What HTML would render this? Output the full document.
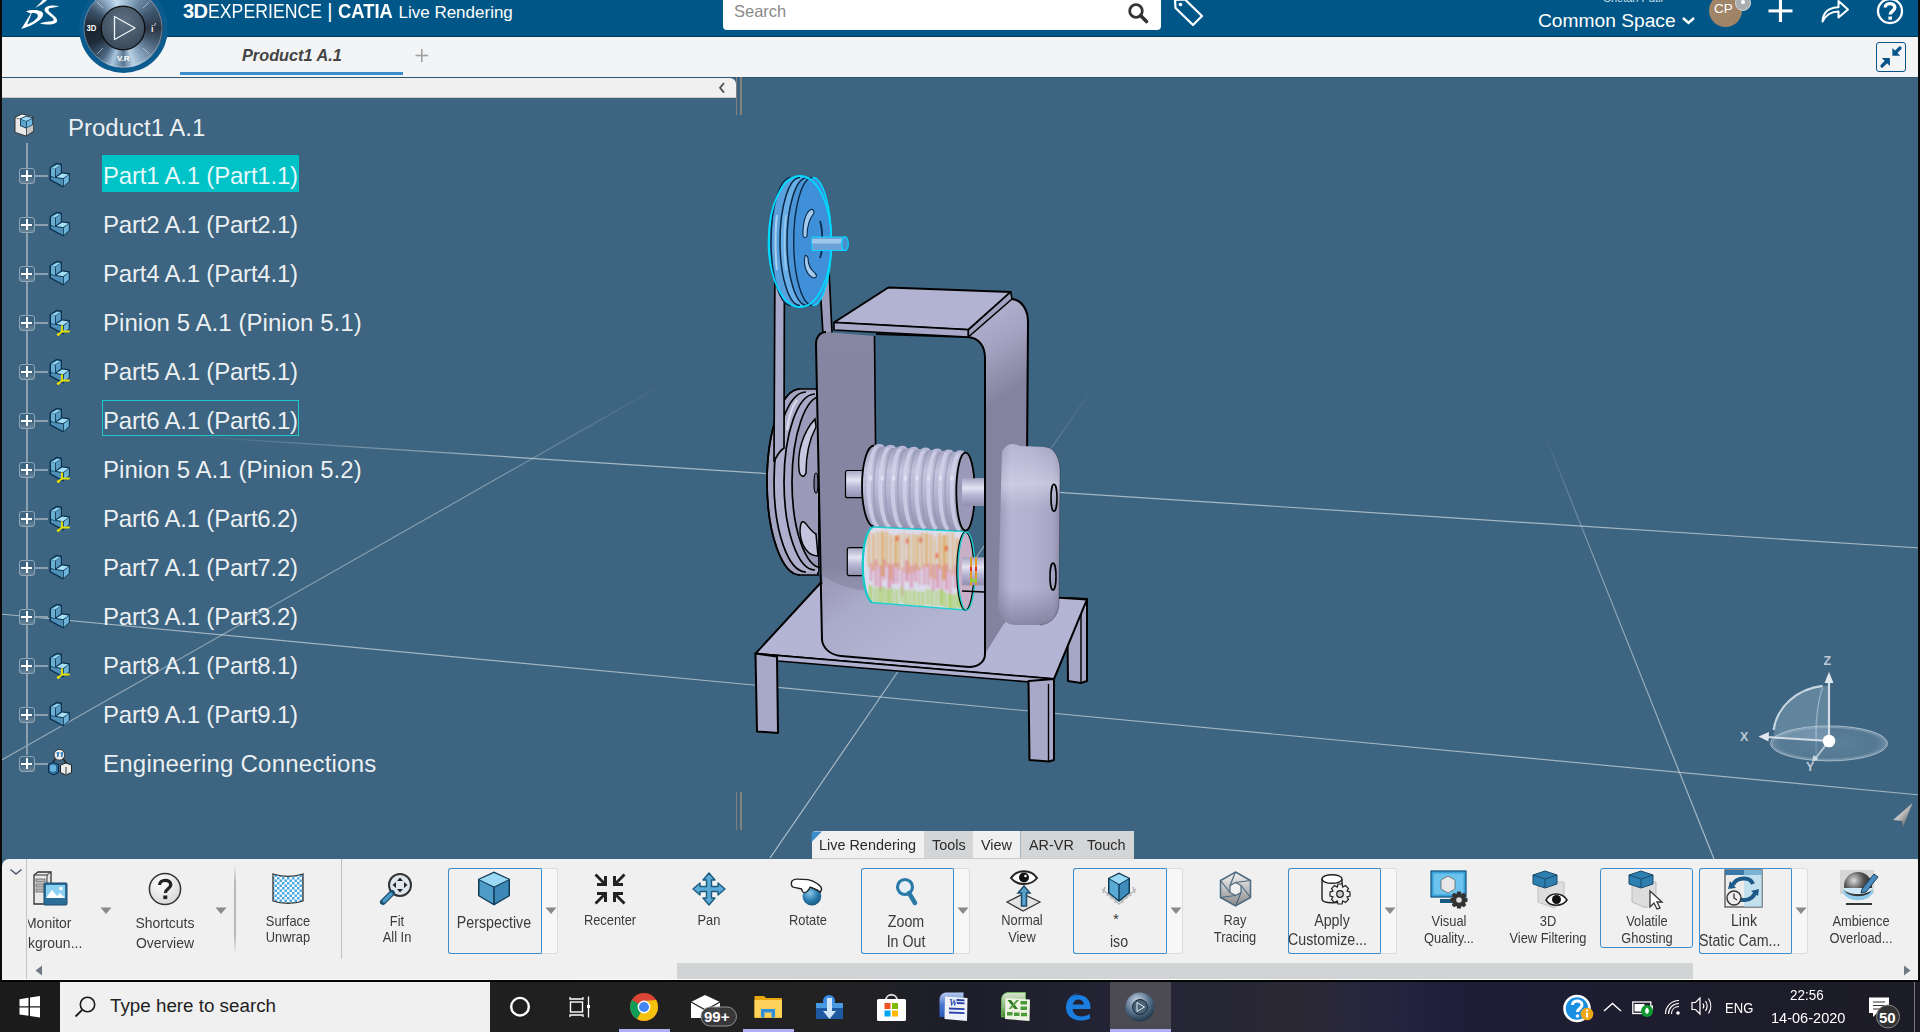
<!DOCTYPE html>
<html><head><meta charset="utf-8">
<style>
*{margin:0;padding:0;box-sizing:border-box}
html,body{width:1920px;height:1032px;overflow:hidden;background:#3d6480;font-family:"Liberation Sans",sans-serif}
.a{position:absolute}
svg{position:absolute;overflow:visible}
#topbar{left:0;top:0;width:1920px;height:37px;background:#005686;border-bottom:1px solid #003a5c}
#tabbar{left:0;top:37px;width:1920px;height:40px;background:#f3f4f6}
#vp{left:0;top:77px;width:1920px;height:782px;background:#3d6480;border-top:1px solid #2f5570}
#lborder{left:0;top:0;width:2px;height:981px;background:#0a0a0a;z-index:50}
.nw{white-space:pre}
.tt{position:absolute;left:103px;font-size:24.8px;letter-spacing:-0.2px;color:rgba(255,255,255,0.92);white-space:pre;line-height:28px;height:28px;transform:translateY(0.6px) scaleX(0.967);transform-origin:0 0}
.pb{position:absolute;left:19px;width:16px;height:16px;border:1.5px solid #8fa6b6;border-radius:3px;background:linear-gradient(#3d6480 50%,#6a8598 100%)}
.pb:before{content:"";position:absolute;left:0.7px;top:5.6px;width:11.6px;height:2px;background:#fff}
.pb:after{content:"";position:absolute;left:5.5px;top:0.8px;width:2px;height:11.6px;background:#fff}
.hl{position:absolute;left:14px;width:35px;height:2px;background:#8aa0b0}
#toolbar{left:2px;top:859px;width:1918px;height:121px;background:#f0f0f0;border-top-left-radius:6px}
#taskbar{left:0;top:980px;width:1920px;height:52px;background:#1d1d26}
.tl{position:absolute;font-size:14px;color:#3a3a3a;text-align:center;line-height:17px;white-space:pre}

</style></head>
<body>
<div id="vp" class="a"></div>
<div id="topbar" class="a"></div>
<div id="tabbar" class="a"></div>
<div id="lborder" class="a"></div>
<!-- DS logo -->
<svg style="left:15px;top:0" width="50" height="32" viewBox="0 0 50 32">
<path fill="#fff" fill-rule="evenodd" d="M11,11.4 C15,9.8 23,9.4 26.8,11.8 C29.3,13.6 28.2,17.2 24,20.6 C19,24.6 12,27.6 6.2,28.9 L15.8,13.4 C14,12.6 12.5,12 11,11.4 Z M16.6,13.2 L12.2,24.4 C17,22.4 21.8,19.5 22.8,16.4 C23.3,14 20.5,12.8 16.6,13.2 Z"/>
<path fill="#fff" d="M20,8 C24.5,5.8 30,2.6 33,-1 L28.6,-1 C26.2,2.2 23.2,5 20,8 Z"/>
<path fill="#fff" d="M 44.2 6.2 C 39 5.2 33.2 5.4 30.6 7.4 C 28.4 9.4 29.8 11.6 33 14.2 L 37.4 17.8 C 39.6 19.6 38.8 21 36.6 21.2 C 32.6 21.5 28.8 21.9 24.8 23.6 C 30 24.9 37 25.1 40.6 23.1 C 43.3 21.5 42.4 18.6 39.2 16 L 34.4 11.8 C 32.8 10.3 33.2 8.7 35.2 8.1 C 38.2 7.3 42 7.1 44.2 6.2 Z"/>
</svg>
<!-- compass -->
<div class="a" style="left:78.5px;top:-16.5px;width:89px;height:89px;border-radius:50%;background:#0b5b8f"></div>
<div class="a" style="left:83.5px;top:-11.5px;width:79px;height:79px;border-radius:50%;background:conic-gradient(from 0deg,#a9c3da 0deg,#6d8aa6 30deg,#3e566e 60deg,#2a3644 90deg,#485f76 115deg,#8eaac4 150deg,#b8d0e4 165deg,#5a7892 180deg,#aac6de 198deg,#4a6680 215deg,#1e2a38 245deg,#1a2430 270deg,#3c5268 300deg,#8aa6c0 325deg,#c4dcee 345deg,#a9c3da 360deg)"></div>
<svg style="left:78px;top:-17px" width="90" height="90" viewBox="-45 -45 90 90">
<defs>
<radialGradient id="cbt" cx="0.5" cy="0.35" r="0.6">
<stop offset="0" stop-color="#5e7183"/><stop offset="1" stop-color="#3c4c5c"/>
</radialGradient>
</defs>
<circle r="39" fill="none" stroke="#dbe6ee" stroke-width="0.7" opacity="0.55"/>
<g stroke="#d9e4ee" stroke-width="0.8" opacity="0.75">
<line x1="-26" y1="-26" x2="-20" y2="-20"/><line x1="26" y1="-26" x2="20" y2="-20"/><line x1="-26" y1="26" x2="-20" y2="20"/><line x1="26" y1="26" x2="20" y2="20"/>
</g>
<circle r="21.8" fill="url(#cbt)" stroke="#0d0d0d" stroke-width="1.3"/>
<path d="M-8.5,-11.5 L12,0 L-8.5,11.5 Z" fill="none" stroke="#f0f4f8" stroke-width="1.3" stroke-linejoin="round"/>
<text x="-36.5" y="3.2" font-size="8.6" font-weight="bold" fill="#fff" font-family="Liberation Sans" transform="scale(0.9,1)" transform-origin="-36.5 0">3D</text>
<text x="28" y="3.5" font-size="9" font-weight="bold" fill="#eee" font-family="Liberation Sans">i</text>
<path d="M32.5,-5 L31.5,-2" stroke="#eee" stroke-width="0.8"/>
<text x="-6" y="33" font-size="8" font-weight="bold" fill="#fff" font-family="Liberation Sans">V.R</text>
<rect x="-0.6" y="-45" width="1.2" height="5" fill="#fff"/>
</svg>
<!-- title -->
<div class="a nw" style="left:183px;top:-3px;color:#fff;font-size:20px;line-height:28px"><b style="letter-spacing:-0.5px">3D</b><span style="display:inline-block;transform:scaleX(0.885);transform-origin:0 0;width:114px">EXPERIENCE</span> <span style="font-weight:normal">|</span> <b style="display:inline-block;transform:scaleX(0.92);transform-origin:0 0;width:55px">CATIA</b> <span style="font-size:17px">Live Rendering</span></div>
<!-- search -->
<div class="a" style="left:723px;top:0;width:438px;height:30px;background:#fff;border-radius:0 0 4px 4px"></div>
<div class="a nw" style="left:734px;top:1px;font-size:16.5px;line-height:20px;color:#8a8a8a">Search</div>
<svg style="left:1127px;top:2px" width="24" height="22" viewBox="0 0 24 22"><circle cx="9" cy="9" r="6.3" fill="none" stroke="#333" stroke-width="2.8"/><line x1="13.5" y1="13.5" x2="19.5" y2="19.5" stroke="#333" stroke-width="3.6" stroke-linecap="round"/></svg>
<!-- tag icon -->
<svg style="left:1172px;top:-3px" width="34" height="30" viewBox="0 0 34 30"><path d="M3,3 L13,2.5 L30,19 L21,28 L3.5,11 Z" fill="none" stroke="#fff" stroke-width="2.2" stroke-linejoin="round"/><circle cx="8.5" cy="7.5" r="1.8" fill="#fff"/></svg>
<!-- right -->
<div class="a nw" style="left:1603px;top:-8px;font-size:11px;line-height:12px;color:#cfe0ee">Chetan Patil</div>
<div class="a nw" style="left:1538px;top:9px;font-size:19.2px;line-height:24px;color:#fff">Common Space</div>
<svg style="left:1681px;top:16px" width="15" height="10" viewBox="0 0 15 10"><path d="M2,2 L7.5,7 L13,2" fill="none" stroke="#fff" stroke-width="2.4"/></svg>
<div class="a" style="left:1709px;top:-6px;width:33px;height:33px;border-radius:50%;background:#a08468"></div>
<div class="a nw" style="left:1714px;top:1px;font-size:13.5px;line-height:16px;color:#fff">CP</div>
<div class="a" style="left:1735px;top:-5px;width:16px;height:16px;border-radius:50%;background:#a9adb2;border:1px solid #d5d8db"></div>
<div class="a" style="left:1741px;top:0px;width:4px;height:4px;border-radius:50%;background:#fff"></div>
<svg style="left:1767px;top:-2px" width="27" height="26" viewBox="0 0 27 26"><rect x="11.9" y="0" width="3.1" height="24" fill="#fff"/><rect x="1.5" y="11.4" width="24" height="3" fill="#fff"/></svg>
<svg style="left:1820px;top:-2px" width="30" height="26" viewBox="0 0 30 26"><path d="M2.5,23.5 C3,14 9,9.5 18.5,9.2 L18.5,3 L28,11.5 L18.5,19.5 L18.5,13.5 C10.5,13.5 6,16.5 2.5,23.5 Z" fill="none" stroke="#fff" stroke-width="2" stroke-linejoin="round"/></svg>
<svg style="left:1875px;top:-3px" width="30" height="28" viewBox="0 0 30 28"><circle cx="15" cy="14" r="12" fill="none" stroke="#fff" stroke-width="2.3"/><path d="M10.2,10.5 C10.2,5.5 19.8,5.2 19.8,10.5 C19.8,14 15.2,14.2 15.2,17.5" fill="none" stroke="#fff" stroke-width="3.4"/><rect x="13.4" y="19.5" width="3.6" height="3.2" fill="#fff"/></svg>
<!-- tab bar content -->
<div class="a nw" style="left:242px;top:45px;font-size:16.3px;line-height:20px;color:#444;font-weight:bold;font-style:italic">Product1 A.1</div>
<div class="a" style="left:180px;top:72px;width:223px;height:3px;background:#3a8ccc"></div>
<svg style="left:415px;top:48px" width="14" height="15" viewBox="0 0 14 15"><rect x="6" y="1" width="1.6" height="13" fill="#a0a0a0"/><rect x="0.5" y="6.7" width="12.6" height="1.6" fill="#a0a0a0"/></svg>
<div class="a" style="left:1876px;top:42px;width:30px;height:30px;border:1.3px solid #05558a;border-radius:3px"></div>
<svg style="left:1876px;top:42px" width="30" height="30" viewBox="0 0 30 30"><g fill="#05558a"><path d="M16.4,5.9 L16.4,13.7 L24.2,13.7 Z"/><path d="M5.8,16 L13.9,16 L13.9,24 Z"/></g><g stroke="#05558a" stroke-width="3.2" stroke-linecap="round"><path d="M19.5,10.5 L24,6"/><path d="M10.5,19.5 L6,24"/></g></svg>
<!-- panel header -->
<div class="a" style="left:2px;top:78px;width:734px;height:20px;background:#f0f0f0;border-bottom:1.5px solid #c8c8c8;border-top-right-radius:6px"></div>
<svg style="left:716px;top:82px" width="12" height="12" viewBox="0 0 12 12"><path d="M8,1 L4,5.8 L8,10.6" fill="none" stroke="#505058" stroke-width="1.8"/></svg>
<div class="a" style="left:736px;top:77px;width:1.2px;height:38px;background:#838080"></div>
<div class="a" style="left:740px;top:77px;width:2px;height:38px;background:#838080"></div>
<div class="a" style="left:736px;top:792px;width:1.2px;height:38px;background:#838080"></div>
<div class="a" style="left:740px;top:792px;width:2px;height:38px;background:#838080"></div>
<div class="a" style="left:1918px;top:0;width:2px;height:981px;background:#0a0a0a;z-index:50"></div>
<svg style="left:0;top:0" width="1920" height="1032" viewBox="0 0 1920 1032">
<defs>
<linearGradient id="lgA" gradientUnits="userSpaceOnUse" x1="180" y1="0" x2="520" y2="0"><stop offset="0" stop-color="#c8d4dc" stop-opacity="0"/><stop offset="1" stop-color="#c8d4dc" stop-opacity="0.75"/></linearGradient>
<linearGradient id="lgC" gradientUnits="userSpaceOnUse" x1="0" y1="761" x2="667" y2="382"><stop offset="0" stop-color="#c8d4dc" stop-opacity="0.6"/><stop offset="0.75" stop-color="#c8d4dc" stop-opacity="0.5"/><stop offset="1" stop-color="#c8d4dc" stop-opacity="0"/></linearGradient>
<linearGradient id="lgD" gradientUnits="userSpaceOnUse" x1="770" y1="858" x2="1098" y2="380"><stop offset="0" stop-color="#d4dee6" stop-opacity="0.8"/><stop offset="0.7" stop-color="#c8d4dc" stop-opacity="0.55"/><stop offset="1" stop-color="#c8d4dc" stop-opacity="0"/></linearGradient>
<linearGradient id="lgE" gradientUnits="userSpaceOnUse" x1="1714" y1="859" x2="1543" y2="430"><stop offset="0" stop-color="#c8d4dc" stop-opacity="0.8"/><stop offset="0.7" stop-color="#c8d4dc" stop-opacity="0.55"/><stop offset="1" stop-color="#c8d4dc" stop-opacity="0"/></linearGradient>
</defs>
<g stroke-width="1.15" fill="none">
<line x1="0" y1="424" x2="1920" y2="548" stroke="url(#lgA)"/>
<line x1="0" y1="614" x2="1920" y2="795" stroke="#c8d4dc" stroke-opacity="0.72"/>
<line x1="0" y1="761" x2="667" y2="382" stroke="url(#lgC)"/>
<line x1="770" y1="858" x2="1098" y2="380" stroke="url(#lgD)"/>
<line x1="1714" y1="859" x2="1543" y2="430" stroke="url(#lgE)"/>
</g>
</svg>
<svg width="0" height="0" style="left:0;top:0"><defs>
<g id="partic">
<path d="M0.5,5.5 L7.5,0.8 L13,1.8 L13,10.2 L20.8,11.2 L20.8,19.5 L14,25.5 L0.5,18.2 Z" fill="#0c3350"/>
<path d="M2,6 L7.8,2.4 L11.6,3 L6,6.8 Z" fill="#8fd3f0"/>
<path d="M2,6 L6,6.8 L6,15.5 L2,14 Z" fill="#6aaed2"/>
<path d="M6.8,6.8 L11.8,3.2 L11.8,10.8 L6.8,14.2 Z" fill="#5a9cc4"/>
<path d="M7.5,15 L13.2,11.5 L19.5,12.4 L14,16.2 Z" fill="#a6e0f7"/>
<path d="M2,15 L14,17.2 L14,24 L2,17.6 Z" fill="#4f8fb8"/>
<path d="M14.8,16.8 L19.8,12.8 L19.8,19.4 L14.8,24 Z" fill="#6eb3d8"/>
</g>
<g id="yel"><path d="M13,17 L13,22.5 M13,22.5 L20,22.5 M13,22.5 L9.5,25.5" stroke="#e8e000" stroke-width="1.8" fill="none" stroke-linecap="round"/><circle cx="9.2" cy="25.6" r="1.4" fill="#e8e000"/></g>
</defs></svg>
<svg style="left:13px;top:112px" width="24" height="26" viewBox="0 0 24 26">
<path d="M1.5,5 L9,1.5 L21,4.5 L21,19.5 L13,24.5 L1.5,20.5 Z" fill="#333"/>
<path d="M2.5,5.5 L9,2.5 L20,5 L13.5,8.5 Z" fill="#f4f4f4"/>
<path d="M2.5,6 L13,9 L13,23.5 L2.5,20 Z" fill="#e8e8e8"/>
<path d="M13.8,9 L20.2,5.6 L20.2,19 L13.8,23.2 Z" fill="#c8c8c8"/>
<path d="M7,6.5 L13.5,3.5 L20,5.5 L20,13 L13,16.5 L7,14 Z" fill="#0f3a5c"/>
<path d="M7.8,7 L13.5,4.5 L19.2,6.2 L13.2,9 Z" fill="#9fd8f2"/>
<path d="M7.8,7.6 L13,9.6 L13,15.6 L7.8,13.6 Z" fill="#5ba3cb"/>
<path d="M13.8,9.6 L19.2,7 L19.2,12.5 L13.8,15.4 Z" fill="#6fb8dc"/>
</svg>
<div class="tt" style="left:68px;top:113px;letter-spacing:0">Product1 A.1</div>
<div class="a" style="left:26px;top:143px;width:2px;height:612px;background:#8aa0b0"></div>
<div class="hl" style="top:175px;left:28px;width:20px"></div>
<div class="pb" style="top:168px"></div>
<svg style="left:48.5px;top:162px" width="22" height="27" viewBox="0 0 22 27"><use href="#partic"/></svg>
<div class="a" style="left:102px;top:155px;width:197px;height:37px;background:#00c3c8"></div>
<div class="tt" style="top:161px;letter-spacing:-0.2px">Part1 A.1 (Part1.1)</div>
<div class="hl" style="top:224px;left:28px;width:20px"></div>
<div class="pb" style="top:217px"></div>
<svg style="left:48.5px;top:211px" width="22" height="27" viewBox="0 0 22 27"><use href="#partic"/></svg>
<div class="tt" style="top:210px;letter-spacing:-0.2px">Part2 A.1 (Part2.1)</div>
<div class="hl" style="top:273px;left:28px;width:20px"></div>
<div class="pb" style="top:266px"></div>
<svg style="left:48.5px;top:260px" width="22" height="27" viewBox="0 0 22 27"><use href="#partic"/></svg>
<div class="tt" style="top:259px;letter-spacing:-0.2px">Part4 A.1 (Part4.1)</div>
<div class="hl" style="top:322px;left:28px;width:20px"></div>
<div class="pb" style="top:315px"></div>
<svg style="left:48.5px;top:309px" width="22" height="27" viewBox="0 0 22 27"><use href="#partic"/><use href="#yel"/></svg>
<div class="tt" style="top:308px;letter-spacing:0.06px">Pinion 5 A.1 (Pinion 5.1)</div>
<div class="hl" style="top:371px;left:28px;width:20px"></div>
<div class="pb" style="top:364px"></div>
<svg style="left:48.5px;top:358px" width="22" height="27" viewBox="0 0 22 27"><use href="#partic"/><use href="#yel"/></svg>
<div class="tt" style="top:357px;letter-spacing:-0.2px">Part5 A.1 (Part5.1)</div>
<div class="hl" style="top:420px;left:28px;width:20px"></div>
<div class="pb" style="top:413px"></div>
<svg style="left:48.5px;top:407px" width="22" height="27" viewBox="0 0 22 27"><use href="#partic"/></svg>
<div class="a" style="left:102px;top:400px;width:197px;height:36px;border:1.5px solid #1ec8c8"></div>
<div class="tt" style="top:406px;letter-spacing:-0.2px">Part6 A.1 (Part6.1)</div>
<div class="hl" style="top:469px;left:28px;width:20px"></div>
<div class="pb" style="top:462px"></div>
<svg style="left:48.5px;top:456px" width="22" height="27" viewBox="0 0 22 27"><use href="#partic"/><use href="#yel"/></svg>
<div class="tt" style="top:455px;letter-spacing:0.06px">Pinion 5 A.1 (Pinion 5.2)</div>
<div class="hl" style="top:518px;left:28px;width:20px"></div>
<div class="pb" style="top:511px"></div>
<svg style="left:48.5px;top:505px" width="22" height="27" viewBox="0 0 22 27"><use href="#partic"/><use href="#yel"/></svg>
<div class="tt" style="top:504px;letter-spacing:-0.2px">Part6 A.1 (Part6.2)</div>
<div class="hl" style="top:567px;left:28px;width:20px"></div>
<div class="pb" style="top:560px"></div>
<svg style="left:48.5px;top:554px" width="22" height="27" viewBox="0 0 22 27"><use href="#partic"/></svg>
<div class="tt" style="top:553px;letter-spacing:-0.2px">Part7 A.1 (Part7.2)</div>
<div class="hl" style="top:616px;left:28px;width:20px"></div>
<div class="pb" style="top:609px"></div>
<svg style="left:48.5px;top:603px" width="22" height="27" viewBox="0 0 22 27"><use href="#partic"/></svg>
<div class="tt" style="top:602px;letter-spacing:-0.2px">Part3 A.1 (Part3.2)</div>
<div class="hl" style="top:665px;left:28px;width:20px"></div>
<div class="pb" style="top:658px"></div>
<svg style="left:48.5px;top:652px" width="22" height="27" viewBox="0 0 22 27"><use href="#partic"/><use href="#yel"/></svg>
<div class="tt" style="top:651px;letter-spacing:-0.2px">Part8 A.1 (Part8.1)</div>
<div class="hl" style="top:714px;left:28px;width:20px"></div>
<div class="pb" style="top:707px"></div>
<svg style="left:48.5px;top:701px" width="22" height="27" viewBox="0 0 22 27"><use href="#partic"/></svg>
<div class="tt" style="top:700px;letter-spacing:-0.2px">Part9 A.1 (Part9.1)</div>
<div class="hl" style="top:763px;left:28px;width:20px"></div>
<div class="pb" style="top:756px"></div>
<svg style="left:47px;top:748px" width="26" height="28" viewBox="0 0 26 28">
<path d="M9,9.5 L5,16 M15.5,9.5 L20,16.5" stroke="#222" stroke-width="1.4"/>
<circle cx="12.4" cy="6.8" r="5.4" fill="#eee" stroke="#333" stroke-width="1"/>
<path d="M9.5,5 L11.5,5 L10.5,9 M13.5,5 L15.5,5 L14.5,9" stroke="#2a7ab8" stroke-width="1.6" fill="none"/>
<path d="M1.5,16.5 L6,14.5 L11.5,16.5 L11.5,24.5 L6.5,27 L1.5,24.5 Z" fill="#2a6c9c" stroke="#0c2a40" stroke-width="1"/>
<path d="M3,17.5 L6,16.5 L9,17.5 L9,23 L6,24 L3,23 Z" fill="#6ab0dc"/>
<path d="M13.5,17 L19,15 L24.5,17 L24.5,24.5 L19,27 L13.5,24.5 Z" fill="#ececec" stroke="#222" stroke-width="1"/>
<path d="M19,19 L19,27" stroke="#666" stroke-width="1.4"/>
</svg>
<div class="tt" style="top:749px;letter-spacing:0.25px">Engineering Connections</div><svg style="left:0;top:0" width="1920" height="1032" viewBox="0 0 1920 1032">
<defs>
<linearGradient id="gWallL" gradientUnits="userSpaceOnUse" x1="0" y1="330" x2="0" y2="660">
<stop offset="0" stop-color="#8786a2"/><stop offset="0.72" stop-color="#8584a1"/><stop offset="0.86" stop-color="#a2a2c0"/><stop offset="1" stop-color="#b0b0cf"/>
</linearGradient>
<linearGradient id="gWallR" gradientUnits="userSpaceOnUse" x1="985" y1="310" x2="1030" y2="380">
<stop offset="0" stop-color="#b2b2d0"/><stop offset="0.45" stop-color="#a2a1bf"/><stop offset="1" stop-color="#83829f"/>
</linearGradient>
<linearGradient id="gFloor" gradientUnits="userSpaceOnUse" x1="830" y1="560" x2="900" y2="660">
<stop offset="0" stop-color="#9493b1"/><stop offset="0.45" stop-color="#aaaac9"/><stop offset="1" stop-color="#b4b4d3"/>
</linearGradient>
<linearGradient id="gHous" x1="0" y1="0" x2="1" y2="0">
<stop offset="0" stop-color="#9898b6"/><stop offset="0.2" stop-color="#b6b6d4"/><stop offset="0.55" stop-color="#b2b2d0"/><stop offset="0.88" stop-color="#a6a6c4"/><stop offset="1" stop-color="#8f8fad"/>
</linearGradient>
<linearGradient id="gHousV" x1="0" y1="0" x2="0" y2="1">
<stop offset="0" stop-color="#d8d8ee" stop-opacity="0"/><stop offset="0.22" stop-color="#dcdcf0" stop-opacity="0.55"/><stop offset="0.35" stop-color="#d8d8ee" stop-opacity="0"/><stop offset="0.8" stop-color="#70708e" stop-opacity="0"/><stop offset="1" stop-color="#6a6a88" stop-opacity="0.6"/>
</linearGradient>
<linearGradient id="gGearV" x1="0" y1="0" x2="0" y2="1">
<stop offset="0" stop-color="#9e9ebc"/><stop offset="0.3" stop-color="#c4c4de"/><stop offset="0.55" stop-color="#b6b6d4"/><stop offset="1" stop-color="#9494b2"/>
</linearGradient>
<linearGradient id="gShaft" x1="0" y1="0" x2="0" y2="1">
<stop offset="0" stop-color="#a6a6c4"/><stop offset="0.35" stop-color="#e4e4f4"/><stop offset="0.6" stop-color="#b8b8d6"/><stop offset="1" stop-color="#9090ae"/>
</linearGradient>
<linearGradient id="gHotV" x1="0" y1="0" x2="0" y2="1">
<stop offset="0" stop-color="#e8a030" stop-opacity="0.55"/><stop offset="0.45" stop-color="#e8a030" stop-opacity="0.45"/><stop offset="0.6" stop-color="#d87898" stop-opacity="0.5"/><stop offset="0.78" stop-color="#d87898" stop-opacity="0.35"/><stop offset="0.85" stop-color="#a0d040" stop-opacity="0.65"/><stop offset="1" stop-color="#90c850" stop-opacity="0.6"/>
</linearGradient>
<linearGradient id="gPul" x1="0" y1="0" x2="1" y2="0">
<stop offset="0" stop-color="#3a86cc"/><stop offset="0.25" stop-color="#6eaee4"/><stop offset="0.5" stop-color="#3e8cd2"/><stop offset="1" stop-color="#4090d8"/>
</linearGradient>
<linearGradient id="gLP" x1="0" y1="0" x2="1" y2="0">
<stop offset="0" stop-color="#9a9ab8"/><stop offset="0.5" stop-color="#b4b4d2"/><stop offset="1" stop-color="#a0a0be"/>
</linearGradient>
<filter id="blr" x="-20%" y="-20%" width="140%" height="140%"><feGaussianBlur stdDeviation="0.7"/></filter>
<filter id="blr2" x="-20%" y="-20%" width="140%" height="140%"><feGaussianBlur stdDeviation="0.9"/></filter>
<clipPath id="cpLG"><path d="M874,527 L964,531.6 L964,610 L872,602.5 A11,38 0 0,1 874,527 Z"/></clipPath>
</defs>

<g stroke="#000" stroke-width="2" stroke-linejoin="round">
<path d="M1067,598 L1087,599 L1087,681 L1081,683 L1068,681 Z" fill="#a6a6c6"/>
<path d="M1081,606 L1081,683" fill="none" stroke-width="1.4"/>
<path d="M755.5,653.6 L820.5,583 L1087,599.4 L1054,679 Z" fill="#b4b4d4"/>
<path d="M755.5,653.6 L1054,679 L1054,684 L778,661 Z" fill="#b0b0d0" stroke-width="1.6"/>
<path d="M755.5,653.6 L777,656.5 L778,733 L757,731.5 Z" fill="#a8a8c8"/>
<path d="M1028.5,681 L1054,679 L1054,760 L1049,761.5 L1029.5,760 Z" fill="#a8a8c8"/>
<path d="M1048.5,684 L1048.5,761" fill="none" stroke-width="1.4"/>
</g>
<g stroke="#000" stroke-width="1.7">
<path d="M818,389 L800,389 A33,93 0 0,0 800,575 L818,575 Z" fill="#a4a4c2"/>
<path d="M818,392 L806,392 A32,90 0 0,0 806,572 L818,572 Z" fill="#b0b0ce" stroke="none"/>
<path d="M806,392 A32,90 0 0,0 806,572" fill="none"/>
<path d="M818,394 L815,394 A31,88 0 0,0 815,570 L818,570 Z" fill="#a8a8c6" stroke="none"/>
<path d="M815,394 A31,88 0 0,0 815,570" fill="none"/>
<path d="M818,397 L822,396 A30,86 0 0,0 822,568 L818,568 Z" fill="#9b9bb9" stroke="none"/>
<path d="M822,396 A30,86 0 0,0 822,568" fill="none"/>
<path d="M800,389 A33,93 0 0,0 800,575" fill="none"/>
<path d="M787,430 C789,415 793,405 797,400" fill="none" stroke="#e8e8f6" stroke-width="2" stroke-opacity="0.8"/>
<path d="M799,470 C797,452 803,432 815,419 L816,427 C809,440 806,455 806,473 C804,478 800,477 799,470 Z" fill="#c8c8e0" stroke-width="1.5"/>
<path d="M802,522 C806,520 808,530 816,534 L818,556 C808,556 801,546 800,532 C800,527 801,523 802,522 Z" fill="#c4c4de" stroke-width="1.5"/>
<ellipse cx="816" cy="483" rx="2" ry="10" fill="#7a7a98" stroke-width="1.2"/>
</g>
<path d="M775,250 L784.5,250 L784,448 C781,450 777,455 774,462 Z" fill="#a8a8c8" stroke="#000" stroke-width="1.7"/>
<path d="M819,270 L829,270 L832,333 L823,334 Z" fill="#9c9cbc" stroke="#000" stroke-width="1.7"/>
<g stroke="#000" stroke-width="2" stroke-linejoin="round">
<path d="M968.4,337 L1012,299 C1022,300 1028,310 1028,322 L1026,600 L1003,625 L985,654 L985,358 C985,346 979,338 968,337 Z" fill="url(#gWallR)" stroke="none"/>
<path d="M1012,299 C1022,300 1028,310 1028,322 L1026,600" fill="none"/>

<path d="M822,560 L985,570 L985,654 C985,662 978,667 969,667 L841,656 C830,655 823,648 823,640 Z" fill="url(#gFloor)" stroke="none"/>
<path d="M816,342 C816,336 820,332 826,332 L874,336 L877,590 C865,592 845,590 821,575 Z" fill="url(#gWallL)" stroke="none"/>
<path d="M826,332 C820,332 816,337 816,344 L822,640 C823,648 830,655 841,656 L969,667 C978,667 985,662 985,654 L985,358 C985,346 979,338 968,337 L876,334" fill="none"/>
<path d="M874.5,336 L877,600" fill="none" stroke-width="1.6"/>
<path d="M834,322.5 L888.3,287.5 L1010.7,292 L968.4,329.8 Z" fill="#b2b2d2"/>
<path d="M834,322.5 L968.4,329.8 L968.4,337 L834,330 Z" fill="#a8a8c8" stroke-width="1.6"/>
<path d="M968.4,329.8 L1010.7,292 L1012,299 L968.4,337 Z" fill="#a0a0c0" stroke-width="1.6"/>
</g>
<path d="M1002,452 C1006,444 1012,442 1020,446 L1045,447 C1054,447 1060,458 1060,470 L1059,602 C1059,615 1052,624 1040,625 L1016,625 C1006,625 999,618 998,605 Z" fill="url(#gHous)"/><path d="M1002,452 C1006,444 1012,442 1020,446 L1045,447 C1054,447 1060,458 1060,470 L1059,602 C1059,615 1052,624 1040,625 L1016,625 C1006,625 999,618 998,605 Z" fill="url(#gHousV)"/>
<path d="M1045,447 C1054,447 1060,458 1060,470 L1059,602 C1059,615 1052,624 1040,625" fill="none" stroke="#000" stroke-width="0.8" stroke-opacity="0.35"/>
<ellipse cx="1054" cy="497.8" rx="3" ry="13.5" fill="none" stroke="#000" stroke-width="1.6"/><ellipse cx="1053" cy="576.6" rx="3" ry="13.5" fill="none" stroke="#000" stroke-width="1.6"/>
<g stroke="#000" stroke-width="1.8">
<rect x="845.5" y="470.5" width="20" height="27.2" rx="2" fill="url(#gShaft)" stroke-width="1.2"/>
<rect x="960" y="478.3" width="24" height="27.6" fill="url(#gShaft)" stroke="none"/>
<path d="M874,445.5 L964,452.6 L964,530.6 L874,526.5 A12,40.5 0 0,1 874,445.5 Z" fill="url(#gGearV)" stroke="none"/>
<path d="M878.8,446.0 A10,40 0 0,0 878.8,526.5" fill="none" stroke="#d4d4ec" stroke-width="4" stroke-opacity="0.75" filter="url(#blr)"/>
<path d="M883.8,446.5 A10,40 0 0,0 883.8,527.0" fill="none" stroke="#9090ae" stroke-width="1.6" stroke-opacity="0.55" filter="url(#blr)"/>
<ellipse cx="870.8" cy="478" rx="1.5" ry="3" fill="#f0f0fa" stroke="none" opacity="0.55" filter="url(#blr)"/>
<path d="M874.8,447.0 a4.5,3 0 0,1 9,0" fill="#b8b8d6" stroke="none"/>
<path d="M890.3,446.9 A10,40 0 0,0 890.3,527.0" fill="none" stroke="#d4d4ec" stroke-width="4" stroke-opacity="0.75" filter="url(#blr)"/>
<path d="M895.3,447.4 A10,40 0 0,0 895.3,527.5" fill="none" stroke="#9090ae" stroke-width="1.6" stroke-opacity="0.55" filter="url(#blr)"/>
<ellipse cx="882.3" cy="478" rx="1.5" ry="3" fill="#f0f0fa" stroke="none" opacity="0.55" filter="url(#blr)"/>
<path d="M886.3,447.9 a4.5,3 0 0,1 9,0" fill="#b8b8d6" stroke="none"/>
<path d="M901.9,447.8 A10,40 0 0,0 901.9,527.6" fill="none" stroke="#d4d4ec" stroke-width="4" stroke-opacity="0.75" filter="url(#blr)"/>
<path d="M906.9,448.3 A10,40 0 0,0 906.9,528.1" fill="none" stroke="#9090ae" stroke-width="1.6" stroke-opacity="0.55" filter="url(#blr)"/>
<ellipse cx="893.9" cy="478" rx="1.5" ry="3" fill="#f0f0fa" stroke="none" opacity="0.55" filter="url(#blr)"/>
<path d="M897.9,448.8 a4.5,3 0 0,1 9,0" fill="#b8b8d6" stroke="none"/>
<path d="M913.4,448.7 A10,40 0 0,0 913.4,528.1" fill="none" stroke="#d4d4ec" stroke-width="4" stroke-opacity="0.75" filter="url(#blr)"/>
<path d="M918.4,449.2 A10,40 0 0,0 918.4,528.6" fill="none" stroke="#9090ae" stroke-width="1.6" stroke-opacity="0.55" filter="url(#blr)"/>
<ellipse cx="905.4" cy="478" rx="1.5" ry="3" fill="#f0f0fa" stroke="none" opacity="0.55" filter="url(#blr)"/>
<path d="M909.4,449.7 a4.5,3 0 0,1 9,0" fill="#b8b8d6" stroke="none"/>
<path d="M925.0,449.6 A10,40 0 0,0 925.0,528.7" fill="none" stroke="#d4d4ec" stroke-width="4" stroke-opacity="0.75" filter="url(#blr)"/>
<path d="M930.0,450.1 A10,40 0 0,0 930.0,529.2" fill="none" stroke="#9090ae" stroke-width="1.6" stroke-opacity="0.55" filter="url(#blr)"/>
<ellipse cx="917.0" cy="478" rx="1.5" ry="3" fill="#f0f0fa" stroke="none" opacity="0.55" filter="url(#blr)"/>
<path d="M921.0,450.6 a4.5,3 0 0,1 9,0" fill="#b8b8d6" stroke="none"/>
<path d="M936.5,450.5 A10,40 0 0,0 936.5,529.2" fill="none" stroke="#d4d4ec" stroke-width="4" stroke-opacity="0.75" filter="url(#blr)"/>
<path d="M941.5,451.0 A10,40 0 0,0 941.5,529.8" fill="none" stroke="#9090ae" stroke-width="1.6" stroke-opacity="0.55" filter="url(#blr)"/>
<ellipse cx="928.5" cy="478" rx="1.5" ry="3" fill="#f0f0fa" stroke="none" opacity="0.55" filter="url(#blr)"/>
<path d="M932.5,451.5 a4.5,3 0 0,1 9,0" fill="#b8b8d6" stroke="none"/>
<path d="M948.1,451.4 A10,40 0 0,0 948.1,529.8" fill="none" stroke="#d4d4ec" stroke-width="4" stroke-opacity="0.75" filter="url(#blr)"/>
<path d="M953.1,451.9 A10,40 0 0,0 953.1,530.3" fill="none" stroke="#9090ae" stroke-width="1.6" stroke-opacity="0.55" filter="url(#blr)"/>
<ellipse cx="940.1" cy="478" rx="1.5" ry="3" fill="#f0f0fa" stroke="none" opacity="0.55" filter="url(#blr)"/>
<path d="M944.1,452.4 a4.5,3 0 0,1 9,0" fill="#b8b8d6" stroke="none"/>
<path d="M959.6,452.3 A10,40 0 0,0 959.6,530.4" fill="none" stroke="#d4d4ec" stroke-width="4" stroke-opacity="0.75" filter="url(#blr)"/>
<path d="M964.6,452.8 A10,40 0 0,0 964.6,530.9" fill="none" stroke="#9090ae" stroke-width="1.6" stroke-opacity="0.55" filter="url(#blr)"/>
<ellipse cx="951.6" cy="478" rx="1.5" ry="3" fill="#f0f0fa" stroke="none" opacity="0.55" filter="url(#blr)"/>
<path d="M955.6,453.3 a4.5,3 0 0,1 9,0" fill="#b8b8d6" stroke="none"/>
<path d="M874,445.5 A12,40.5 0 0,0 874,526.5" fill="none"/>
<ellipse cx="965.5" cy="491.6" rx="9.2" ry="39" fill="#9a9ab8"/>
<rect x="962" y="478.3" width="22" height="27.6" fill="url(#gShaft)" stroke="none"/>
<rect x="847.3" y="547.6" width="18" height="28" rx="2" fill="url(#gShaft)" stroke-width="1.2"/>
<path d="M874,527 L964,531.6 L964,610 L872,602.5 A11,38 0 0,1 874,527 Z" fill="#dcdcee" stroke="none"/>
<g clip-path="url(#cpLG)"><g filter="url(#blr2)">
<rect x="868.0" y="531.3" width="1.7" height="35.9" fill="#e09a28" opacity="0.71" stroke="none"/>
<rect x="870.2" y="563.0" width="1.9" height="18.1" fill="#d87898" opacity="0.70" stroke="none"/>
<rect x="869.0" y="585.0" width="2.9" height="16" fill="#9ccf48" opacity="0.80" stroke="none"/>
<rect x="872.4" y="533.3" width="2.1" height="37.6" fill="#e09a28" opacity="0.72" stroke="none"/>
<rect x="874.6" y="559.5" width="2.7" height="26.7" fill="#d87898" opacity="0.61" stroke="none"/>
<rect x="873.4" y="587.3" width="3.5" height="16" fill="#9ccf48" opacity="0.52" stroke="none"/>
<rect x="876.8" y="532.0" width="2.5" height="34.8" fill="#e09a28" opacity="0.51" stroke="none"/>
<rect x="879.0" y="565.4" width="2.5" height="25.2" fill="#d87898" opacity="0.71" stroke="none"/>
<rect x="877.8" y="587.6" width="3.9" height="16" fill="#9ccf48" opacity="0.62" stroke="none"/>
<rect x="881.2" y="531.4" width="2.5" height="45.0" fill="#e09a28" opacity="0.81" stroke="none"/>
<rect x="883.4" y="559.5" width="2.0" height="20.2" fill="#d87898" opacity="0.74" stroke="none"/>
<rect x="882.2" y="586.8" width="3.4" height="16" fill="#9ccf48" opacity="0.59" stroke="none"/>
<rect x="885.6" y="531.3" width="2.1" height="35.6" fill="#e09a28" opacity="0.70" stroke="none"/>
<rect x="887.8" y="563.7" width="3.1" height="24.8" fill="#d87898" opacity="0.73" stroke="none"/>
<rect x="886.6" y="588.8" width="4.0" height="16" fill="#9ccf48" opacity="0.70" stroke="none"/>
<rect x="890.0" y="534.4" width="1.6" height="45.4" fill="#e09a28" opacity="0.82" stroke="none"/>
<rect x="892.2" y="563.8" width="2.8" height="20.1" fill="#d87898" opacity="0.70" stroke="none"/>
<rect x="891.0" y="588.0" width="2.9" height="16" fill="#9ccf48" opacity="0.52" stroke="none"/>
<rect x="894.4" y="535.4" width="2.6" height="31.4" fill="#e09a28" opacity="0.78" stroke="none"/>
<rect x="896.6" y="562.8" width="2.0" height="20.9" fill="#d87898" opacity="0.68" stroke="none"/>
<rect x="895.4" y="589.6" width="2.6" height="16" fill="#9ccf48" opacity="0.68" stroke="none"/>
<rect x="898.8" y="534.1" width="1.5" height="35.3" fill="#e09a28" opacity="0.81" stroke="none"/>
<rect x="901.0" y="567.6" width="2.5" height="28.0" fill="#d87898" opacity="0.54" stroke="none"/>
<rect x="899.8" y="586.8" width="3.4" height="16" fill="#9ccf48" opacity="0.51" stroke="none"/>
<rect x="903.2" y="532.4" width="1.7" height="39.8" fill="#e09a28" opacity="0.55" stroke="none"/>
<rect x="905.4" y="560.3" width="3.0" height="21.1" fill="#d87898" opacity="0.74" stroke="none"/>
<rect x="904.2" y="590.4" width="3.1" height="16" fill="#9ccf48" opacity="0.64" stroke="none"/>
<rect x="907.6" y="534.1" width="2.1" height="39.5" fill="#e09a28" opacity="0.70" stroke="none"/>
<rect x="909.8" y="565.2" width="3.1" height="23.1" fill="#d87898" opacity="0.58" stroke="none"/>
<rect x="908.6" y="590.0" width="2.9" height="16" fill="#9ccf48" opacity="0.59" stroke="none"/>
<rect x="912.0" y="533.6" width="2.8" height="38.8" fill="#e09a28" opacity="0.50" stroke="none"/>
<rect x="914.2" y="563.8" width="2.6" height="18.2" fill="#d87898" opacity="0.63" stroke="none"/>
<rect x="913.0" y="590.0" width="2.6" height="16" fill="#9ccf48" opacity="0.69" stroke="none"/>
<rect x="916.4" y="534.8" width="2.1" height="35.6" fill="#e09a28" opacity="0.75" stroke="none"/>
<rect x="918.6" y="566.7" width="1.8" height="18.6" fill="#d87898" opacity="0.65" stroke="none"/>
<rect x="917.4" y="591.7" width="2.9" height="16" fill="#9ccf48" opacity="0.64" stroke="none"/>
<rect x="920.8" y="532.9" width="2.2" height="35.8" fill="#e09a28" opacity="0.61" stroke="none"/>
<rect x="923.0" y="564.0" width="2.6" height="21.0" fill="#d87898" opacity="0.56" stroke="none"/>
<rect x="921.8" y="591.3" width="2.5" height="16" fill="#9ccf48" opacity="0.67" stroke="none"/>
<rect x="925.2" y="533.1" width="2.4" height="33.6" fill="#e09a28" opacity="0.78" stroke="none"/>
<rect x="927.4" y="563.2" width="2.1" height="22.4" fill="#d87898" opacity="0.66" stroke="none"/>
<rect x="926.2" y="589.0" width="3.0" height="16" fill="#9ccf48" opacity="0.60" stroke="none"/>
<rect x="929.6" y="534.1" width="2.6" height="43.7" fill="#e09a28" opacity="0.56" stroke="none"/>
<rect x="931.8" y="564.2" width="2.7" height="26.8" fill="#d87898" opacity="0.59" stroke="none"/>
<rect x="930.6" y="589.8" width="2.7" height="16" fill="#9ccf48" opacity="0.66" stroke="none"/>
<rect x="934.0" y="536.6" width="1.7" height="43.4" fill="#e09a28" opacity="0.56" stroke="none"/>
<rect x="936.2" y="564.0" width="2.9" height="24.4" fill="#d87898" opacity="0.69" stroke="none"/>
<rect x="935.0" y="590.6" width="2.7" height="16" fill="#9ccf48" opacity="0.59" stroke="none"/>
<rect x="938.4" y="533.6" width="2.5" height="35.5" fill="#e09a28" opacity="0.65" stroke="none"/>
<rect x="940.6" y="565.4" width="2.4" height="27.2" fill="#d87898" opacity="0.50" stroke="none"/>
<rect x="939.4" y="589.6" width="3.9" height="16" fill="#9ccf48" opacity="0.76" stroke="none"/>
<rect x="942.8" y="534.9" width="2.8" height="45.2" fill="#e09a28" opacity="0.82" stroke="none"/>
<rect x="945.0" y="564.0" width="2.8" height="26.4" fill="#d87898" opacity="0.65" stroke="none"/>
<rect x="943.8" y="592.0" width="2.9" height="16" fill="#9ccf48" opacity="0.60" stroke="none"/>
<rect x="947.2" y="532.9" width="1.7" height="39.4" fill="#e09a28" opacity="0.60" stroke="none"/>
<rect x="949.4" y="569.0" width="1.9" height="27.0" fill="#d87898" opacity="0.66" stroke="none"/>
<rect x="948.2" y="594.0" width="3.8" height="16" fill="#9ccf48" opacity="0.77" stroke="none"/>
<rect x="951.6" y="532.8" width="2.2" height="41.9" fill="#e09a28" opacity="0.56" stroke="none"/>
<rect x="953.8" y="565.1" width="2.7" height="23.2" fill="#d87898" opacity="0.57" stroke="none"/>
<rect x="952.6" y="594.4" width="3.4" height="16" fill="#9ccf48" opacity="0.60" stroke="none"/>
<rect x="956.0" y="538.2" width="1.8" height="37.6" fill="#e09a28" opacity="0.77" stroke="none"/>
<rect x="958.2" y="565.8" width="2.1" height="23.3" fill="#d87898" opacity="0.70" stroke="none"/>
<rect x="957.0" y="591.7" width="3.7" height="16" fill="#9ccf48" opacity="0.78" stroke="none"/>
<rect x="960.4" y="538.2" width="2.5" height="30.1" fill="#e09a28" opacity="0.72" stroke="none"/>
<rect x="962.6" y="570.2" width="1.9" height="20.7" fill="#d87898" opacity="0.53" stroke="none"/>
<rect x="961.4" y="593.5" width="3.1" height="16" fill="#9ccf48" opacity="0.64" stroke="none"/>
<rect x="896.1" y="536.0" width="2" height="5" fill="#e83030" opacity="0.8" stroke="none"/>
<rect x="906.2" y="538.5" width="2" height="5" fill="#e83030" opacity="0.8" stroke="none"/>
<rect x="919.5" y="537.4" width="2" height="5" fill="#e83030" opacity="0.8" stroke="none"/>
<rect x="935.9" y="553.1" width="2" height="5" fill="#e83030" opacity="0.8" stroke="none"/>
<rect x="945.3" y="546.0" width="2" height="5" fill="#e83030" opacity="0.8" stroke="none"/>
<rect x="959.3" y="542.3" width="2" height="5" fill="#e83030" opacity="0.8" stroke="none"/>
</g></g>
<path d="M874,527 L964,531.6 L964,610 L872,602.5 A11,38 0 0,1 874,527 Z" fill="none" stroke="#20d0d0" stroke-width="1.5"/>
<path d="M874,527 A11,38 0 0,0 872,602.5" fill="none" stroke="#18c8c8" stroke-width="2.2"/>
<ellipse cx="965.5" cy="571" rx="8.5" ry="39" fill="#c8b0c8" stroke="#000" stroke-width="1.6"/>
<ellipse cx="966.5" cy="571" rx="8.5" ry="39" fill="none" stroke="#18c8c8" stroke-width="1.4"/>
<rect x="962" y="557.3" width="22" height="28" fill="url(#gShaft)" stroke="none"/>
<rect x="970" y="557.3" width="2" height="28" fill="#e09a28" stroke="none"/><rect x="975" y="557.3" width="2" height="28" fill="#e09a28" stroke="none"/><rect x="970" y="567" width="2" height="4" fill="#e03030" stroke="none"/><rect x="975" y="567" width="2" height="4" fill="#e03030" stroke="none"/><rect x="970" y="579" width="7" height="3" fill="#90d040" stroke="none"/>
<path d="M962,591 L984,592" fill="none" stroke-width="1.4"/>
</g>
<g>
<ellipse cx="800" cy="241.5" rx="31.5" ry="65.5" fill="#00d8ff"/>
<ellipse cx="800" cy="241.5" rx="30" ry="64" fill="#3e8cd2"/>
<path d="M791,177.5 A20,64 0 0,0 791,305.5 L801,305.5 L801,177.5 Z" fill="#5aa0dc"/>
<path d="M791,177.5 A20,64 0 0,0 791,305.5" fill="none" stroke="#0a2a48" stroke-width="1.5"/>
<path d="M800,177.5 A20,64 0 0,0 800,305.5 L810,305.5 L810,177.5 Z" fill="#6aaee6"/>
<path d="M800,177.5 A20,64 0 0,0 800,305.5" fill="none" stroke="#0a2a48" stroke-width="1.5"/>
<path d="M807,177.5 A20,64 0 0,0 807,305.5 L817,305.5 L817,177.5 Z" fill="#4a94d6"/>
<path d="M807,177.5 A20,64 0 0,0 807,305.5" fill="none" stroke="#0a2a48" stroke-width="1.5"/>
<path d="M777,215 C775,230 775,255 777,270" fill="none" stroke="#b8dcf8" stroke-width="2" stroke-opacity="0.8"/>
<path d="M786,215 C784,230 784,255 786,270" fill="none" stroke="#b8dcf8" stroke-width="1.6" stroke-opacity="0.6"/>
<ellipse cx="812.5" cy="241.5" rx="18.8" ry="64" fill="#3f90d8"/>
<path d="M812.5,177.5 A18.8,64 0 0,0 812.5,305.5" fill="none" stroke="#0a2a48" stroke-width="1.4"/>
<ellipse cx="800" cy="241.5" rx="31.5" ry="65.5" fill="none" stroke="#00d8ff" stroke-width="1.8"/>
<path d="M812.5,177.5 A18.8,64 0 0,1 812.5,305.5" fill="none" stroke="#00d8ff" stroke-width="1.5"/>
<path d="M811,209.5 C806,212 802.5,222 803,236 C804,238 806,238 807,236 C807,226 810,218 814,213 C814,210 812.5,209 811,209.5 Z" fill="#a4ccf0" stroke="#0a2a48" stroke-width="1.1"/>
<path d="M805,256 C803,266 807,276 814,278 C817,278 817,275 815,273 C811,270 808,264 808,258 C807,255 805,255 805,256 Z" fill="#a4ccf0" stroke="#0a2a48" stroke-width="1.1"/>
<path d="M820,221 C823,230 823,250 820,258" fill="none" stroke="#0a2a48" stroke-width="1.8"/>
<rect x="812" y="237" width="34" height="13.5" fill="#6aa2d8" stroke="#00d8ff" stroke-width="1"/>
<rect x="812" y="239" width="33" height="4.5" fill="#a0c8ec"/>
<ellipse cx="845" cy="243.8" rx="3.3" ry="7" fill="#4a90d0" stroke="#00d8ff" stroke-width="1.1"/>
</g>
</svg><svg style="left:1730px;top:650px" width="170" height="130" viewBox="1730 650 170 130">
<defs>
<radialGradient id="axg" cx="0.5" cy="0.5" r="0.5"><stop offset="0" stop-color="#a8c4d8" stop-opacity="0.3"/><stop offset="0.8" stop-color="#a8c4d8" stop-opacity="0.22"/><stop offset="1" stop-color="#d8e6f0" stop-opacity="0.3"/></radialGradient>
</defs>
<ellipse cx="1829" cy="743.4" rx="58.5" ry="17.5" fill="url(#axg)" stroke="#dde8f0" stroke-width="1" stroke-opacity="0.6"/><ellipse cx="1829" cy="743.4" rx="56.5" ry="16" fill="none" stroke="#dde8f0" stroke-width="0.6" stroke-opacity="0.35"/>
<path d="M1829,741 L1773.6,736 A56,56 0 0,1 1823,686 L1829,686 Z" fill="#a8c4d8" fill-opacity="0.35"/>
<path d="M1773.6,730 A56,52 0 0,1 1822.6,685.8" fill="none" stroke="#dde8f0" stroke-width="2.2" stroke-opacity="0.85"/>
<path d="M1823,688 C1818,700 1815,720 1816,740" fill="none" stroke="#dde8f0" stroke-width="0.8" stroke-opacity="0.5"/>
<line x1="1829" y1="741" x2="1829" y2="680" stroke="#d4dee6" stroke-width="2.2"/>
<path d="M1829,672 L1833.5,683 L1824.5,683 Z" fill="#e0e8ee"/>
<line x1="1829" y1="741" x2="1766" y2="737" stroke="#d4dee6" stroke-width="2.2"/>
<path d="M1758.5,736.5 L1769,732 L1768.5,741.5 Z" fill="#e0e8ee"/>
<line x1="1829" y1="741" x2="1815" y2="759" stroke="#b8c8d4" stroke-width="2"/>
<path d="M1812,762 L1813.5,755 L1818.5,759 Z" fill="#d0dce4"/>
<path d="M1822,686 C1818,700 1816,725 1816,760" fill="none" stroke="#dde8f0" stroke-width="0.6" stroke-opacity="0.4"/>
<circle cx="1829" cy="741" r="6.3" fill="#fff"/>
<text x="1823.5" y="665" font-size="12.5" font-weight="bold" fill="#bccad6" font-family="Liberation Sans">Z</text>
<text x="1740" y="741" font-size="12.5" font-weight="bold" fill="#bccad6" font-family="Liberation Sans">X</text>
<text x="1806" y="771" font-size="12.5" font-weight="bold" fill="#bccad6" font-family="Liberation Sans">Y</text>
</svg>
<svg style="left:1890px;top:800px" width="26" height="30" viewBox="0 0 26 30">
<defs><linearGradient id="crg" x1="0" y1="0" x2="1" y2="1"><stop offset="0" stop-color="#ffffff"/><stop offset="0.5" stop-color="#b8b8b8"/><stop offset="1" stop-color="#303030"/></linearGradient></defs>
<path d="M3,20 L22.5,3 L13,27 L12,21 Z" fill="url(#crg)"/>
</svg>
<div class="a" style="left:2px;top:858.5px;width:1916px;height:121px;background:#f0f0f0;border-top-left-radius:7px"></div>
<div class="a" style="left:0;top:979px;width:1920px;height:1px;background:#fafafa"></div>
<div class="a" style="left:26px;top:859px;width:1.3px;height:120px;background:#c4c4c4"></div>
<svg style="left:9px;top:868px" width="14" height="8" viewBox="0 0 14 8"><path d="M1.5,1.5 L7,6 L12.5,1.5" fill="none" stroke="#4a5a6a" stroke-width="1.6"/></svg>
<div class="a" style="left:677px;top:963px;width:1016px;height:16px;background:#d1d4d5"></div>
<svg style="left:35px;top:965px" width="8" height="11" viewBox="0 0 8 11"><path d="M7,0.5 L7,10.5 L0.5,5.5 Z" fill="#707a86"/></svg>
<svg style="left:1903px;top:965px" width="8" height="11" viewBox="0 0 8 11"><path d="M1,0.5 L1,10.5 L7.5,5.5 Z" fill="#707a86"/></svg>
<div class="a" style="left:28px;top:860px;width:80px;height:100px;overflow:hidden">
<svg style="left:5px;top:11px" width="36" height="36" viewBox="0 0 36 36"><path d="M1,4 L5,1 L18,1 L18,30 L14,33 L1,33 Z" fill="#e8e8e8" stroke="#333" stroke-width="1.3"/><path d="M1,4 L14,4 L18,1 M14,4 L14,33" fill="none" stroke="#333" stroke-width="1"/><rect x="3" y="8" width="9" height="3" fill="#bbb" stroke="#555" stroke-width="0.7"/><rect x="3" y="13" width="9" height="3" fill="#bbb" stroke="#555" stroke-width="0.7"/><rect x="3" y="18" width="9" height="3" fill="#bbb" stroke="#555" stroke-width="0.7"/><rect x="11" y="12" width="23" height="22" rx="1" fill="#2a6e9a" stroke="#1a4a6a" stroke-width="1"/><rect x="13" y="14" width="19" height="13" fill="#8ad0f0"/><path d="M13,27 L19,19 L24,25 L27,22 L32,27 Z" fill="#fff"/><circle cx="28" cy="17.5" r="1.8" fill="#fff"/></svg>
<div class="a nw" style="left:-3px;font-size:15.5px;line-height:18px;color:#3a3a3a;transform:scaleX(0.9);transform-origin:0 0;top:54px">Monitor</div>
<div class="a nw" style="left:-7px;top:74px;font-size:15.5px;line-height:18px;color:#3a3a3a;transform:scaleX(0.9);transform-origin:0 0">ckgroun...</div>
</div>
<svg style="left:100px;top:907px" width="12" height="8" viewBox="0 0 12 8"><path d="M0.5,0.5 L11.5,0.5 L6,7 Z" fill="#8a8a8a"/></svg>
<svg style="left:148px;top:872px" width="34" height="34" viewBox="0 0 34 34"><defs><radialGradient id="qg" cx="0.4" cy="0.3" r="0.7"><stop offset="0" stop-color="#fff"/><stop offset="1" stop-color="#d8d8d8"/></radialGradient></defs><circle cx="17" cy="17" r="15.6" fill="url(#qg)" stroke="#333" stroke-width="1.5"/><path d="M11.5,13 C11.5,6.8 22.8,6.8 22.8,12.8 C22.8,16.5 17.3,17 17.3,21" fill="none" stroke="#222" stroke-width="3.3"/><rect x="15.3" y="23.5" width="4" height="3.6" fill="#222"/></svg>
<div class="a nw" style="left:65px;top:913.5px;width:200px;text-align:center;font-size:15.5px;line-height:17.8px;color:#3a3a3a;transform:scaleX(0.9)">Shortcuts</div>
<div class="a nw" style="left:65px;top:933.5px;width:200px;text-align:center;font-size:15.5px;line-height:17.8px;color:#3a3a3a;transform:scaleX(0.9)">Overview</div>
<svg style="left:215px;top:907px" width="12" height="8" viewBox="0 0 12 8"><path d="M0.5,0.5 L11.5,0.5 L6,7 Z" fill="#8a8a8a"/></svg>
<div class="a" style="left:234px;top:865px;width:1.5px;height:88px;background:linear-gradient(#f0f0f0,#b8b8b8 20%,#b8b8b8 80%,#f0f0f0)"></div>
<svg style="left:272px;top:872px" width="33" height="33" viewBox="0 0 33 33"><defs><pattern id="chk" width="5" height="5" patternUnits="userSpaceOnUse"><rect width="5" height="5" fill="#fff"/><rect width="2.5" height="2.5" fill="#4aa8e0"/><rect x="2.5" y="2.5" width="2.5" height="2.5" fill="#4aa8e0"/></pattern></defs><path d="M1,2 C10,5 22,5 31,2 L31,29 C22,32 10,32 1,29 Z" fill="url(#chk)" stroke="#333" stroke-width="1.3"/></svg>
<div class="a nw" style="left:188px;top:913.0px;width:200px;text-align:center;font-size:14.3px;line-height:16.4px;color:#3a3a3a;transform:scaleX(0.9)">Surface</div>
<div class="a nw" style="left:188px;top:929.4px;width:200px;text-align:center;font-size:14.3px;line-height:16.4px;color:#3a3a3a;transform:scaleX(0.9)">Unwrap</div>
<div class="a" style="left:341px;top:859px;width:1.3px;height:100px;background:#c0c0c0"></div>
<svg style="left:379px;top:872px" width="36" height="36" viewBox="0 0 36 36"><circle cx="21" cy="13" r="11" fill="#dfe8ee" stroke="#333" stroke-width="2"/><path d="M21,5.5 L24,9 L18,9 Z M21,20.5 L24,17 L18,17 Z M13.5,13 L17,10 L17,16 Z M28.5,13 L25,10 L25,16 Z" fill="#222"/><path d="M13,21 L4,30" stroke="#1a4a6a" stroke-width="6" stroke-linecap="round"/><path d="M12,22 L5,29" stroke="#4a9ac8" stroke-width="3.5" stroke-linecap="round"/></svg>
<div class="a nw" style="left:297px;top:913.0px;width:200px;text-align:center;font-size:14.3px;line-height:16.4px;color:#3a3a3a;transform:scaleX(0.9)">Fit</div>
<div class="a nw" style="left:297px;top:929.4px;width:200px;text-align:center;font-size:14.3px;line-height:16.4px;color:#3a3a3a;transform:scaleX(0.9)">All In</div>
<div class="a" style="left:448px;top:867.5px;width:93px;height:86.5px;border:1.6px solid #3d8fcf;border-right:none;border-radius:3px 0 0 3px"></div>
<div class="a" style="left:541px;top:867.5px;width:17px;height:86.5px;background:#f7f7f7;border:1.2px solid #dcdcdc;border-left:1.6px solid #3d8fcf;border-radius:0 3px 3px 0"></div>
<svg style="left:544.5px;top:906.5px" width="12" height="8" viewBox="0 0 12 8"><path d="M0.5,0.5 L11.5,0.5 L6,7 Z" fill="#8a8a8a"/></svg>
<svg style="left:476px;top:870px" width="36" height="37" viewBox="0 0 36 37"><path d="M2,9 L18,1.5 L34,9 L34,26 L18,35.5 L2,26 Z" fill="#0e3a56"/><path d="M3.5,9.5 L18,3 L32.5,9.5 L18,16.5 Z" fill="#9ad8f4"/><path d="M3.5,10.5 L17.2,17.4 L17.2,33.6 L3.5,25.4 Z" fill="#4f9cc8"/><path d="M18.8,17.4 L32.5,10.5 L32.5,25.4 L18.8,33.6 Z" fill="#3e88b8"/></svg>
<div class="a nw" style="left:394px;top:913.5px;width:200px;text-align:center;font-size:15.8px;line-height:18.2px;color:#3a3a3a;transform:scaleX(0.9)">Perspective</div>
<svg style="left:593px;top:872px" width="34" height="34" viewBox="0 0 34 34"><g fill="#222"><path d="M1.5,3.5 L3.5,1.5 L11,9 L11,4 L14,4 L14,14 L4,14 L4,11 L9,11 Z"/><path d="M32.5,3.5 L30.5,1.5 L23,9 L23,4 L20,4 L20,14 L30,14 L30,11 L25,11 Z"/><path d="M1.5,30.5 L3.5,32.5 L11,25 L11,30 L14,30 L14,20 L4,20 L4,23 L9,23 Z"/><path d="M32.5,30.5 L30.5,32.5 L23,25 L23,30 L20,30 L20,20 L30,20 L30,23 L25,23 Z"/></g></svg>
<div class="a nw" style="left:509.5px;top:912.3px;width:200px;text-align:center;font-size:14.3px;line-height:16.4px;color:#3a3a3a;transform:scaleX(0.9)">Recenter</div>
<svg style="left:692px;top:872px" width="34" height="34" viewBox="0 0 34 34"><path d="M17,1 L23,8 L19.5,8 L19.5,14.5 L26,14.5 L26,11 L33,17 L26,23 L26,19.5 L19.5,19.5 L19.5,26 L23,26 L17,33 L11,26 L14.5,26 L14.5,19.5 L8,19.5 L8,23 L1,17 L8,11 L8,14.5 L14.5,14.5 L14.5,8 L11,8 Z" fill="#5aaad8" stroke="#1d5a80" stroke-width="1.4" stroke-linejoin="round"/></svg>
<div class="a nw" style="left:608.5px;top:912.3px;width:200px;text-align:center;font-size:14.3px;line-height:16.4px;color:#3a3a3a;transform:scaleX(0.9)">Pan</div>
<svg style="left:790px;top:876px" width="34" height="32" viewBox="0 0 34 32"><defs><radialGradient id="rbg" cx="0.4" cy="0.35" r="0.65"><stop offset="0" stop-color="#8cc8ea"/><stop offset="0.6" stop-color="#2e7fb0"/><stop offset="1" stop-color="#1a5a84"/></radialGradient></defs><circle cx="21.9" cy="20" r="9.4" fill="url(#rbg)"/><path d="M1.6,5.5 C3,3.5 5,3 7,3.1 L18.1,3.6 C23,4.5 27.5,7.8 27.5,7.8 C30,9.5 31.6,12 31.6,13.4 L30.3,16.2 C28,14.5 26,13.5 24.7,13 C22,11.5 21,11 20,11.1 C19.5,13 18.6,14.5 17,15.5 C15,16.8 13.4,17.1 12.5,15.5 C12,14.5 11.6,13 11.6,13 L3.1,11.1 C1.5,10.5 1,9 1.6,5.5 Z" fill="#fff" stroke="#222" stroke-width="1.4" stroke-linejoin="round"/><path d="M20,11.1 C22,12 24,13 24.7,13" fill="none" stroke="#222" stroke-width="1"/></svg>
<div class="a nw" style="left:707.5px;top:912.3px;width:200px;text-align:center;font-size:14.3px;line-height:16.4px;color:#3a3a3a;transform:scaleX(0.9)">Rotate</div>
<div class="a" style="left:860.5px;top:867.5px;width:92.5px;height:86.5px;border:1.6px solid #3d8fcf;border-right:none;border-radius:3px 0 0 3px"></div>
<div class="a" style="left:953px;top:867.5px;width:17px;height:86.5px;background:#f7f7f7;border:1.2px solid #dcdcdc;border-left:1.6px solid #3d8fcf;border-radius:0 3px 3px 0"></div>
<svg style="left:956.5px;top:906.5px" width="12" height="8" viewBox="0 0 12 8"><path d="M0.5,0.5 L11.5,0.5 L6,7 Z" fill="#8a8a8a"/></svg>
<svg style="left:895px;top:877px" width="24" height="30" viewBox="0 0 24 30"><circle cx="10" cy="10" r="7.5" fill="#e6f0f6" stroke="#2a7aa8" stroke-width="3.2"/><path d="M14,16 L20,26" stroke="#2a7aa8" stroke-width="4.5" stroke-linecap="round"/></svg>
<div class="a nw" style="left:806px;top:913.1px;width:200px;text-align:center;font-size:15.8px;line-height:18.2px;color:#3a3a3a;transform:scaleX(0.9)">Zoom</div>
<div class="a nw" style="left:806px;top:932.8px;width:200px;text-align:center;font-size:15.8px;line-height:18.2px;color:#3a3a3a;transform:scaleX(0.9)">In Out</div>
<svg style="left:1003px;top:869px" width="40" height="40" viewBox="0 0 40 40"><path d="M4,33 L20,25 L37,33 L20,42 Z" fill="#e4e4e4" stroke="#333" stroke-width="1.2"/><path d="M8,9 C14,0 28,0 34,9 C28,17 14,17 8,9 Z" fill="#fff" stroke="#222" stroke-width="2"/><circle cx="21" cy="8.5" r="5" fill="#111"/><circle cx="22.5" cy="7" r="1.3" fill="#fff"/><path d="M21,17 L27,24 L23.5,24 L23.5,37 L18.5,37 L18.5,24 L15,24 Z" fill="#5aa2cc" stroke="#1d4e6e" stroke-width="1.5"/></svg>
<div class="a nw" style="left:922px;top:912.3px;width:200px;text-align:center;font-size:14.3px;line-height:16.4px;color:#3a3a3a;transform:scaleX(0.9)">Normal</div>
<div class="a nw" style="left:922px;top:929.2px;width:200px;text-align:center;font-size:14.3px;line-height:16.4px;color:#3a3a3a;transform:scaleX(0.9)">View</div>
<div class="a" style="left:1073px;top:867.5px;width:93px;height:86.5px;border:1.6px solid #3d8fcf;border-right:none;border-radius:3px 0 0 3px"></div>
<div class="a" style="left:1166px;top:867.5px;width:17px;height:86.5px;background:#f7f7f7;border:1.2px solid #dcdcdc;border-left:1.6px solid #3d8fcf;border-radius:0 3px 3px 0"></div>
<svg style="left:1169.5px;top:906.5px" width="12" height="8" viewBox="0 0 12 8"><path d="M0.5,0.5 L11.5,0.5 L6,7 Z" fill="#8a8a8a"/></svg>
<svg style="left:1101px;top:872px" width="38" height="34" viewBox="0 0 38 34"><g stroke="#b8b8b8" stroke-width="1.5" fill="none"><path d="M1,17 L18,32 L35,17"/><path d="M4,15 L2,21 M8,19 L6,24 M12,22 L10,27 M16,26 L14,31 M32,15 L34,21 M28,19 L30,24 M24,22 L26,27 M20,26 L22,31"/></g><path d="M7,6 L18,0.5 L29,6 L29,21 L18,30 L7,21 Z" fill="#0e3a56"/><path d="M8.5,6.5 L18,2 L27.5,6.5 L18,12 Z" fill="#9ad8f4"/><path d="M8.5,7.5 L17.3,12.7 L17.3,27.8 L8.5,20.6 Z" fill="#5aaad6"/><path d="M18.7,12.7 L27.5,7.5 L27.5,20.6 L18.7,27.8 Z" fill="#3e8cbc"/></svg>
<div class="a nw" style="left:1113px;top:911px;font-size:15px;line-height:16px;color:#3a3a3a">*</div>
<div class="a nw" style="left:1019px;top:932.8px;width:200px;text-align:center;font-size:15.8px;line-height:18.2px;color:#3a3a3a;transform:scaleX(0.9)">iso</div>
<svg style="left:1219px;top:871px" width="33" height="36" viewBox="0 0 33 36"><defs><linearGradient id="rtg" x1="0" y1="0" x2="0" y2="1"><stop offset="0" stop-color="#f4f4f4"/><stop offset="1" stop-color="#8a8a8a"/></linearGradient></defs><path d="M16.5,1 L31.5,9.5 L31.5,26.5 L16.5,35 L1.5,26.5 L1.5,9.5 Z" fill="url(#rtg)" stroke="#4a6a80" stroke-width="1.5"/><path d="M16.5,11.5 L22,14.5 L22,21.5 L16.5,24.5 L11,21.5 L11,14.5 Z" fill="#f0f0f0" stroke="#4a6a80" stroke-width="1.2"/><path d="M16.5,1 L11,14.5 M31.5,9.5 L16.5,11.5 M31.5,26.5 L22,14.5 M16.5,35 L22,21.5 M1.5,26.5 L16.5,24.5 M1.5,9.5 L11,21.5" stroke="#4a6a80" stroke-width="1.2"/></svg>
<div class="a nw" style="left:1135px;top:912.3px;width:200px;text-align:center;font-size:14.3px;line-height:16.4px;color:#3a3a3a;transform:scaleX(0.9)">Ray</div>
<div class="a nw" style="left:1135px;top:929.2px;width:200px;text-align:center;font-size:14.3px;line-height:16.4px;color:#3a3a3a;transform:scaleX(0.9)">Tracing</div>
<div class="a" style="left:1287.5px;top:867.5px;width:92.5px;height:86.5px;border:1.6px solid #3d8fcf;border-right:none;border-radius:3px 0 0 3px"></div>
<div class="a" style="left:1380px;top:867.5px;width:17px;height:86.5px;background:#f7f7f7;border:1.2px solid #dcdcdc;border-left:1.6px solid #3d8fcf;border-radius:0 3px 3px 0"></div>
<svg style="left:1383.5px;top:906.5px" width="12" height="8" viewBox="0 0 12 8"><path d="M0.5,0.5 L11.5,0.5 L6,7 Z" fill="#8a8a8a"/></svg>
<svg style="left:1320px;top:873px" width="32" height="33" viewBox="0 0 32 33"><path d="M2,6 L2,26 C2,31 22,31 22,26 L22,6" fill="#f2f2f2" stroke="#222" stroke-width="1.4"/><ellipse cx="12" cy="6" rx="10" ry="4.3" fill="#fff" stroke="#222" stroke-width="1.4"/><g transform="translate(20,21)"><path d="M-2,-10 L2,-10 L2.8,-7 L5.5,-8.5 L8.5,-5.5 L7,-2.8 L10,-2 L10,2 L7,2.8 L8.5,5.5 L5.5,8.5 L2.8,7 L2,10 L-2,10 L-2.8,7 L-5.5,8.5 L-8.5,5.5 L-7,2.8 L-10,2 L-10,-2 L-7,-2.8 L-8.5,-5.5 L-5.5,-8.5 L-2.8,-7 Z" fill="#eee" stroke="#222" stroke-width="1.2"/><circle r="3.3" fill="#ccc" stroke="#222" stroke-width="1.2"/></g></svg>
<div class="a nw" style="left:1282px;top:911.5px;width:100px;text-align:center;font-size:15.8px;line-height:18px;color:#3a3a3a;transform:scaleX(0.9)">Apply</div>
<div class="a nw" style="left:1288px;top:931px;font-size:15.8px;line-height:18px;color:#3a3a3a;transform:scaleX(0.9);transform-origin:0 0">Customize...</div>
<svg style="left:1430px;top:870px" width="40" height="40" viewBox="0 0 40 40"><rect x="1" y="1" width="35" height="26" fill="#3aa0d8" stroke="#1a5a80" stroke-width="1.3"/><rect x="3.5" y="3.5" width="30" height="21" fill="#6cc4ee"/><path d="M10,29 L26,29 L26,33 L10,33 Z" fill="#1a5a80"/><path d="M11,10 L18,6 L25,10 L25,19 L18,23 L11,19 Z" fill="#e8e8e8" stroke="#666" stroke-width="0.8"/><g transform="translate(29,30)"><path d="M-1.8,-8.5 L1.8,-8.5 L2.5,-6 L5,-7.2 L7.2,-5 L6,-2.5 L8.5,-1.8 L8.5,1.8 L6,2.5 L7.2,5 L5,7.2 L2.5,6 L1.8,8.5 L-1.8,8.5 L-2.5,6 L-5,7.2 L-7.2,5 L-6,2.5 L-8.5,1.8 L-8.5,-1.8 L-6,-2.5 L-7.2,-5 L-5,-7.2 L-2.5,-6 Z" fill="#333"/><circle r="2.8" fill="#ddd"/></g></svg>
<div class="a nw" style="left:1349.3px;top:912.8px;width:200px;text-align:center;font-size:14.3px;line-height:16.4px;color:#3a3a3a;transform:scaleX(0.9)">Visual</div>
<div class="a nw" style="left:1349.3px;top:929.6px;width:200px;text-align:center;font-size:14.3px;line-height:16.4px;color:#3a3a3a;transform:scaleX(0.9)">Quality...</div>
<svg style="left:1532px;top:870px" width="36" height="40" viewBox="0 0 36 40"><path d="M6,12 L6,32 L22,38 L32,30 L32,12 Z" fill="#dcdcdc" stroke="#bbb" stroke-width="1" opacity="0.9"/><path d="M1,5 L13,1 L25,5 L25,14 L13,18 L1,14 Z" fill="#2d7fb0" stroke="#1a4a6a" stroke-width="1"/><path d="M1,5 L13,9 L25,5 M13,9 L13,18" stroke="#1a4a6a" stroke-width="1" fill="none"/><path d="M14,30 C18,22 30,22 35,30 C30,37 18,37 14,30 Z" fill="#fff" stroke="#222" stroke-width="1.6"/><circle cx="24.5" cy="29.5" r="4.5" fill="#111"/></svg>
<div class="a nw" style="left:1448.2px;top:912.8px;width:200px;text-align:center;font-size:14.3px;line-height:16.4px;color:#3a3a3a;transform:scaleX(0.9)">3D</div>
<div class="a nw" style="left:1448.2px;top:929.6px;width:200px;text-align:center;font-size:14.3px;line-height:16.4px;color:#3a3a3a;transform:scaleX(0.9)">View Filtering</div>
<div class="a" style="left:1600.4px;top:867.5px;width:92.89999999999986px;height:80.5px;border:1.6px solid #3d8fcf;border-radius:3px"></div>
<svg style="left:1628px;top:870px" width="38" height="40" viewBox="0 0 38 40"><path d="M4,12 L4,32 L18,38 L28,30 L28,12 Z" fill="#dcdcdc" stroke="#bbb" stroke-width="1"/><path d="M1,5 L13,1 L25,5 L25,14 L13,18 L1,14 Z" fill="#2d7fb0" stroke="#1a4a6a" stroke-width="1"/><path d="M1,5 L13,9 L25,5 M13,9 L13,18" stroke="#1a4a6a" stroke-width="1" fill="none"/><path d="M22,21 L22,37 L26,33 L29,39 L32,38 L29,32 L34,32 Z" fill="#fff" stroke="#333" stroke-width="1.3"/></svg>
<div class="a nw" style="left:1547px;top:912.8px;width:200px;text-align:center;font-size:14.3px;line-height:16.4px;color:#3a3a3a;transform:scaleX(0.9)">Volatile</div>
<div class="a nw" style="left:1547px;top:929.6px;width:200px;text-align:center;font-size:14.3px;line-height:16.4px;color:#3a3a3a;transform:scaleX(0.9)">Ghosting</div>
<div class="a" style="left:1698.5px;top:867.5px;width:92.5px;height:86.70000000000005px;border:1.6px solid #3d8fcf;border-right:none;border-radius:3px 0 0 3px"></div>
<div class="a" style="left:1791px;top:867.5px;width:17px;height:86.70000000000005px;background:#f7f7f7;border:1.2px solid #dcdcdc;border-left:1.6px solid #3d8fcf;border-radius:0 3px 3px 0"></div>
<svg style="left:1794.5px;top:906.5px" width="12" height="8" viewBox="0 0 12 8"><path d="M0.5,0.5 L11.5,0.5 L6,7 Z" fill="#8a8a8a"/></svg>
<svg style="left:1724px;top:869px" width="40" height="40" viewBox="0 0 40 40"><rect x="1" y="1" width="37" height="37" fill="#ececec" stroke="#555" stroke-width="1.3"/><rect x="1" y="1" width="37" height="5" fill="#3a7aa8"/><rect x="20" y="1" width="18" height="37" fill="#a8d8f0" opacity="0.6"/><path d="M9,16 C12,8 26,7 29,15" fill="none" stroke="#1e5a88" stroke-width="4"/><path d="M6,12 L12,19 L4,20 Z" fill="#1e5a88"/><path d="M31,24 C28,32 16,33 13,28" fill="none" stroke="#1e5a88" stroke-width="4"/><path d="M34,27 L27,22 L35,20 Z" fill="#1e5a88"/><circle cx="10" cy="29" r="7" fill="#eee" stroke="#333" stroke-width="1.4"/><path d="M10,24.5 L10,29 L13,31" fill="none" stroke="#333" stroke-width="1.3"/></svg>
<div class="a nw" style="left:1694px;top:911.5px;width:100px;text-align:center;font-size:15.8px;line-height:18px;color:#3a3a3a;transform:scaleX(0.9)">Link</div>
<div class="a nw" style="left:1699px;top:931.5px;font-size:15.8px;line-height:18px;color:#3a3a3a;transform:scaleX(0.9);transform-origin:0 0">Static Cam...</div>
<svg style="left:1838px;top:869px" width="44" height="40" viewBox="0 0 44 40"><defs><radialGradient id="amg" cx="0.35" cy="0.3" r="0.7"><stop offset="0" stop-color="#ddd"/><stop offset="0.5" stop-color="#555"/><stop offset="1" stop-color="#222"/></radialGradient></defs><rect x="2" y="1" width="34" height="24" fill="#bbb" opacity="0.5"/><circle cx="20" cy="17" r="14" fill="url(#amg)"/><path d="M5,19 C8,30 32,30 35,19 L35,23 C32,34 8,34 5,23 Z" fill="#8fcaea"/><path d="M5,19 C8,27 32,27 35,19" fill="#cfeaf8"/><rect x="8" y="34" width="26" height="2" fill="#333"/><path d="M24,20 L36,5 L40,8 L28,23 L23,24 Z" fill="#4a8abc" stroke="#1d3f5a" stroke-width="1"/></svg>
<div class="a nw" style="left:1760.5px;top:912.8px;width:200px;text-align:center;font-size:14.3px;line-height:16.4px;color:#3a3a3a;transform:scaleX(0.9)">Ambience</div>
<div class="a nw" style="left:1760.5px;top:929.6px;width:200px;text-align:center;font-size:14.3px;line-height:16.4px;color:#3a3a3a;transform:scaleX(0.9)">Overload...</div>
<div class="a" style="left:811.5px;top:831px;width:322px;height:28px;background:#f0f0f0;border-radius:4px 0 0 0"></div>
<div class="a" style="left:924px;top:831px;width:49px;height:28px;background:#d3d5d7"></div>
<div class="a" style="left:1020px;top:831px;width:113.5px;height:28px;background:#d3d5d7;border-left:1.5px solid #9fb3c4"></div>
<div class="a" style="left:811.5px;top:857.5px;width:322px;height:1.5px;background:#c8ccd0"></div>
<svg style="left:811px;top:831px" width="11" height="11" viewBox="0 0 11 11"><path d="M0.5,11 L0.5,4 C0.5,2 2,0.5 4,0.5 L11,0.5 Z" fill="#3a8ccc"/></svg>
<div class="a nw" style="left:819px;top:835.5px;font-size:15.5px;line-height:18px;color:#2a2a2a;transform:scaleX(0.93);transform-origin:0 0">Live Rendering</div>
<div class="a nw" style="left:932px;top:835.5px;font-size:15.5px;line-height:18px;color:#2a2a2a;transform:scaleX(0.93);transform-origin:0 0">Tools</div>
<div class="a nw" style="left:981px;top:835.5px;font-size:15.5px;line-height:18px;color:#2a2a2a;transform:scaleX(0.93);transform-origin:0 0">View</div>
<div class="a nw" style="left:1029px;top:835.5px;font-size:15.5px;line-height:18px;color:#2a2a2a;transform:scaleX(0.93);transform-origin:0 0">AR-VR</div>
<div class="a nw" style="left:1087px;top:835.5px;font-size:15.5px;line-height:18px;color:#2a2a2a;transform:scaleX(0.93);transform-origin:0 0">Touch</div><div class="a" style="left:0;top:980px;width:1920px;height:52px;background:linear-gradient(90deg,#1b1b1b 0px,#1f1f1f 480px,#222224 850px,#1d1d2a 960px,#252536 1150px,#2a2834 1300px,#262540 1390px,#1e1e3a 1450px,#1e1d30 1600px,#1c1c26 1920px)"></div>
<div class="a" style="left:0;top:980px;width:1920px;height:2px;background:#050505"></div>
<svg style="left:19px;top:996px" width="22" height="22" viewBox="0 0 22 22"><path d="M0.5,3.2 L9.5,1.8 L9.5,10.2 L0.5,10.2 Z M11,1.5 L21,0 L21,10.2 L11,10.2 Z M0.5,11.6 L9.5,11.6 L9.5,19.8 L0.5,18.6 Z M11,11.6 L21,11.6 L21,21.5 L11,20 Z" fill="#fff"/></svg>
<div class="a" style="left:60px;top:982px;width:430px;height:50px;background:#f0f0f0"></div>
<svg style="left:73px;top:995px" width="26" height="24" viewBox="0 0 26 24"><circle cx="14.5" cy="9.5" r="7.2" fill="none" stroke="#1a1a1a" stroke-width="1.6"/><path d="M9.2,14.8 L2.5,21.5" stroke="#1a1a1a" stroke-width="1.8"/></svg>
<div class="a nw" style="left:110px;top:995px;font-size:18.8px;line-height:22px;color:#1e1e1e">Type here to search</div>
<svg style="left:508px;top:995px" width="24" height="24" viewBox="0 0 24 24"><circle cx="12" cy="11.7" r="8.8" fill="none" stroke="#fff" stroke-width="2.4"/></svg>
<svg style="left:568px;top:995px" width="24" height="24" viewBox="0 0 24 24"><path d="M2,2 L2,4 L15,4 L15,2 M2,22 L2,20 L15,20 L15,22" fill="none" stroke="#fff" stroke-width="1.3"/><rect x="2.5" y="7" width="12" height="10" fill="none" stroke="#fff" stroke-width="1.4"/><path d="M20.5,1.5 L20.5,22.5" stroke="#fff" stroke-width="1.3"/><rect x="19" y="10" width="3" height="3" fill="#fff"/></svg>
<svg style="left:629px;top:992px" width="30" height="30" viewBox="-15 -15 30 30"><circle r="14" fill="#db4437"/><path d="M0,0 L-12.1,-7 A14,14 0 0,0 -7,12.1 Z" fill="#0f9d58"/><path d="M0,0 L-7,12.1 A14,14 0 0,0 14,0 L12.1,-7 Z" fill="#f4c20d"/><path d="M0,-6 L12.1,-7 A14,14 0 0,1 14,0 Z" fill="#f4c20d"/><circle r="6.4" fill="#fff"/><circle r="5" fill="#4285f4"/></svg>
<div class="a" style="left:619px;top:1029px;width:51px;height:3px;background:#b0aef2"></div>
<svg style="left:690px;top:994px" width="50" height="36" viewBox="0 0 50 36"><path d="M1,8 L15,1 L30,8 L30,24 L1,24 Z" fill="#fff"/><path d="M1,8 L15.5,16 L30,8" fill="none" stroke="#222" stroke-width="1.3"/><rect x="11" y="13" width="35.5" height="19" rx="9.5" fill="#3a3a3c" stroke="#999" stroke-width="1" opacity="0.95"/><text x="14" y="28" font-size="15" font-weight="bold" fill="#fff" font-family="Liberation Sans">99+</text></svg>
<svg style="left:754px;top:994px" width="29" height="25" viewBox="0 0 29 25"><path d="M0.5,2 L10,2 L12,4 L28,4 L28,24 L0.5,24 Z" fill="#e8a712"/><path d="M0.5,6 L28,6 L28,23.5 L0.5,23.5 Z" fill="#fcd25a"/><path d="M7,23.5 L7,15 L21,15 L21,23.5 L17.5,23.5 L17.5,18.5 L10.5,18.5 L10.5,23.5 Z" fill="#2f8ee0"/></svg>
<div class="a" style="left:743px;top:1029px;width:51px;height:3px;background:#b0aef2"></div>
<svg style="left:815px;top:994px" width="30" height="28" viewBox="0 0 30 28"><circle cx="14" cy="7" r="6" fill="#3a8ee8"/><path d="M1,9 L28,9 L28,25 L1,25 Z" fill="#1e5aa0"/><path d="M1,9 L28,9 L28,14 L1,14 Z" fill="#4a9ae0"/><path d="M12,4 L17,4 L17,17 L21,17 L14.5,25 L8,17 L12,17 Z" fill="#d0e6f8"/></svg>
<svg style="left:876px;top:991px" width="31" height="31" viewBox="0 0 31 31"><path d="M10,9 C10,2 21,2 21,9" fill="none" stroke="#ddd" stroke-width="1.8"/><rect x="1" y="8" width="29" height="22" rx="1.5" fill="#fff"/><rect x="8.5" y="12" width="6" height="6" fill="#f25022"/><rect x="16" y="12" width="6" height="6" fill="#7fba00"/><rect x="8.5" y="19.5" width="6" height="6" fill="#00a4ef"/><rect x="16" y="19.5" width="6" height="6" fill="#ffb900"/></svg>
<svg style="left:938px;top:991px" width="32" height="32" viewBox="0 0 32 32"><defs><linearGradient id="wdg" x1="0" y1="0" x2="0" y2="1"><stop offset="0" stop-color="#b8ccf0"/><stop offset="0.5" stop-color="#4a78d0"/><stop offset="1" stop-color="#2a58b8"/></linearGradient></defs><path d="M1.5,26 L1.5,9 C1.5,4 4.5,1.5 9,1.5 L25.5,1.5 L25.5,26 Z" fill="url(#wdg)"/><path d="M7,5.5 L29.5,7 L29,30 L6.5,28 Z" fill="#eef2f8"/><text x="11" y="14.5" font-size="9.5" font-weight="bold" font-style="italic" fill="#2a4cb0" font-family="Liberation Serif">W</text><path d="M19,9 L26.5,9.3 M19,12 L26.5,12.3 M11,17.5 L26.5,18.2 M11,21.5 L26.5,22.2" stroke="#2a40a8" stroke-width="1.8"/></svg>
<svg style="left:1000px;top:991px" width="32" height="32" viewBox="0 0 32 32"><defs><linearGradient id="exg" x1="0" y1="0" x2="0" y2="1"><stop offset="0" stop-color="#d8e4d0"/><stop offset="0.6" stop-color="#8ab87a"/><stop offset="1" stop-color="#3a8a2a"/></linearGradient></defs><path d="M1.5,26 L1.5,9 C1.5,4 4.5,1.5 9,1.5 L25.5,1.5 L25.5,26 Z" fill="url(#exg)" stroke="#6cc050" stroke-width="0.8"/><path d="M5.5,7 L30,8.5 L29.5,30 L5,28 Z" fill="#eef4e4"/><path d="M7.5,9 L11,9 L18,18 L14.5,18 Z" fill="#2e7a1e"/><path d="M16.5,9 L19,9 L11,18 L8.5,18 Z" fill="#5aa04a"/><g fill="#4a9a3a"><rect x="20.5" y="10" width="6.5" height="3.5"/><rect x="20.5" y="15.5" width="6.5" height="3.5"/><rect x="7" y="21" width="5.5" height="3.5"/><rect x="14" y="21.5" width="5.5" height="3.5"/><rect x="21" y="21.8" width="6" height="3.5"/></g></svg>
<svg style="left:1064px;top:992px" width="28" height="30" viewBox="0 0 28 30"><path d="M14.5,3 C21.5,3 26.5,8 26.5,15 L26.5,17 L8.5,17 C9,21.5 12.5,24.5 17.5,24.5 C20.5,24.5 23.5,23.5 26,22 L26,26.5 C23,28 20,28.6 16.5,28.6 C8,28.6 2,23 2,15.5 C2,8.5 7.5,3 14.5,3 Z M8.8,12.5 L20,12.5 C19.5,9.3 17.2,7.5 14.5,7.5 C11.7,7.5 9.5,9.3 8.8,12.5 Z" fill="#1a7ee0" fill-rule="evenodd"/><path d="M2.5,12 C4,5 10,1 16,1.5 C9,2.5 6,6 4.5,11 Z" fill="#1a7ee0"/></svg>
<div class="a" style="left:1110px;top:982px;width:61px;height:50px;background:#4c4b54"></div>
<div class="a" style="left:1110px;top:1029px;width:61px;height:3px;background:#b0aef2"></div>
<svg style="left:1125px;top:992px" width="30" height="30" viewBox="-15 -15 30 30"><defs><radialGradient id="tcg" cx="0.4" cy="0.3" r="0.7"><stop offset="0" stop-color="#c8d8e6"/><stop offset="0.6" stop-color="#56728c"/><stop offset="1" stop-color="#23384c"/></radialGradient></defs><circle r="14.5" fill="url(#tcg)"/><circle r="7.5" fill="#4a6276" stroke="#1a2632" stroke-width="1"/><path d="M-3,-4.5 L4.5,0 L-3,4.5 Z" fill="none" stroke="#e8eef4" stroke-width="1"/></svg>
<svg style="left:1563px;top:994px" width="32" height="30" viewBox="0 0 32 30"><circle cx="14" cy="14.5" r="12.5" fill="#1a8ee0" stroke="#fff" stroke-width="2.6"/><path d="M9.5,11 C9.5,5.5 19,5.5 19,11 C19,14.5 14.5,14.5 14.5,18" fill="none" stroke="#fff" stroke-width="3"/><circle cx="14.5" cy="22" r="1.8" fill="#fff"/><circle cx="24" cy="20" r="6.3" fill="#f0a818"/><rect x="23" y="18.5" width="2" height="5" fill="#fff"/><rect x="23" y="15.5" width="2" height="1.8" fill="#fff"/></svg>
<svg style="left:1603px;top:1002px" width="19" height="10" viewBox="0 0 19 10"><path d="M1,9 L9.5,1.5 L18,9" fill="none" stroke="#fff" stroke-width="1.4"/></svg>
<svg style="left:1632px;top:1001px" width="22" height="18" viewBox="0 0 22 18"><rect x="0.8" y="1" width="18" height="11.5" fill="none" stroke="#fff" stroke-width="1.3"/><rect x="2.5" y="3" width="10" height="7.5" fill="#fff"/><rect x="19" y="4.5" width="2" height="4.5" fill="#fff"/><circle cx="15" cy="10" r="6" fill="#109a30"/><path d="M15,6.5 C17.5,8.5 17.5,11.5 15,13 C12.5,11.5 12.5,8.5 15,6.5 Z" fill="#fff"/></svg>
<svg style="left:1664px;top:999px" width="18" height="17" viewBox="0 0 18 17"><path d="M1.5,15 C1.5,7.5 7.5,1.5 15,1.5 M4.5,15 C4.5,9 9,4.5 15,4.5 M7.5,15 C7.5,10.5 10.5,7.5 15,7.5" fill="none" stroke="#fff" stroke-width="1.1"/><circle cx="14" cy="14" r="1.8" fill="#fff"/></svg>
<svg style="left:1691px;top:996px" width="22" height="20" viewBox="0 0 22 20"><path d="M1,6.5 L4.5,6.5 L9,2 L9,18 L4.5,13.5 L1,13.5 Z" fill="none" stroke="#fff" stroke-width="1.2"/><path d="M12,7.5 C13,9 13,11 12,12.5 M14.5,5 C16.5,8 16.5,12 14.5,15 M17.5,2.5 C20.5,7 20.5,13 17.5,17.5" fill="none" stroke="#fff" stroke-width="1.2"/></svg>
<div class="a nw" style="left:1725px;top:999px;font-size:15px;line-height:17px;color:#fff;transform:scaleX(0.87);transform-origin:0 0">ENG</div>
<div class="a nw" style="left:1790px;top:987px;font-size:14.6px;line-height:17px;color:#fff;transform:scaleX(0.92);transform-origin:0 0">22:56</div>
<div class="a nw" style="left:1771px;top:1009px;font-size:15px;line-height:17px;color:#fff;transform:scaleX(0.97);transform-origin:0 0">14-06-2020</div>
<svg style="left:1868px;top:996px" width="40" height="36" viewBox="0 0 40 36"><path d="M1,1.5 L21,1.5 L21,17 L9,17 L5,21 L5,17 L1,17 Z" fill="#fff"/><path d="M5,6 L17,6 M5,9.5 L17,9.5 M5,13 L14,13" stroke="#333" stroke-width="1.2"/><circle cx="20" cy="20.5" r="11.5" fill="#333" stroke="#888" stroke-width="1"/><text x="11" y="26.5" font-size="15" font-weight="bold" fill="#fff" font-family="Liberation Sans">50</text></svg>
<div class="a" style="left:1913.5px;top:982px;width:1px;height:50px;background:#7a7a80"></div>

</body></html>
